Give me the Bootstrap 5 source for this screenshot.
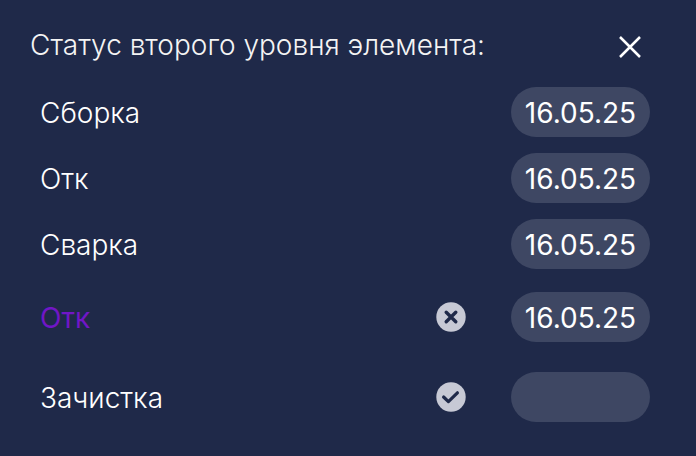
<!DOCTYPE html>
<html lang="ru">
<head>
<meta charset="utf-8">
<meta name="viewport" content="width=device-width, initial-scale=1">
<title>Статус второго уровня элемента</title>
<link href="https://cdn.jsdelivr.net/npm/bootstrap@5.3.0/dist/css/bootstrap.min.css" rel="stylesheet">
<style>
  body {
    background: #1f2949;
    color: #fff;
    font-family: Inter, "Liberation Sans", sans-serif;
    font-size: 28px;
    font-weight: 300;
    line-height: 34px;
  }
  .status-panel { padding: 27px 46px 24px 30px; }
  .status-title { color: #f4f4f4; font-size: 28px; line-height: 36px; font-weight: 300; }
  .close-btn { padding: 9px; line-height: 0; }
  .status-list { padding-left: 10px; margin-top: 20px; gap: 16px; }
  .status-list label { padding-top: 2px; }
  .date-field {
    width: 139px;
    height: 50px;
    padding: 2px 8px 0;
    background: #3e4763;
    color: #fff;
    font-size: 28px;
    font-weight: 400;
  }
  .date-field:focus { background: #3e4763; color: #fff; }
  .action-btn { width: 64px; height: 64px; margin-right: 28px; line-height: 0; }
  .status-list .status-current { color: #7116c6; font-weight: 400; }
</style>
</head>
<body>
<main class="status-panel">
  <header class="d-flex justify-content-between align-items-start">
    <h1 class="status-title mb-0">Статус второго уровня элемента:</h1>
    <button type="button" class="btn close-btn border-0" aria-label="Закрыть">
      <svg width="22" height="22" viewBox="0 0 22 22" fill="none" stroke="#fff" stroke-width="2.5" aria-hidden="true"><path d="M1 1 21 21M21 1 1 21"/></svg>
    </button>
  </header>
  <ul class="status-list list-unstyled d-flex flex-column mb-0">
    <li class="d-flex align-items-center">
      <label class="me-auto" for="date-assembly">Сборка</label>
      <input class="date-field form-control rounded-pill border-0 text-center" id="date-assembly" type="text" value="16.05.25">
    </li>
    <li class="d-flex align-items-center">
      <label class="me-auto" for="date-check-1">Отк</label>
      <input class="date-field form-control rounded-pill border-0 text-center" id="date-check-1" type="text" value="16.05.25">
    </li>
    <li class="d-flex align-items-center">
      <label class="me-auto" for="date-welding">Сварка</label>
      <input class="date-field form-control rounded-pill border-0 text-center" id="date-welding" type="text" value="16.05.25">
    </li>
    <li class="d-flex align-items-center">
      <label class="status-current me-auto" for="date-check-2">Отк</label>
      <button type="button" class="btn action-btn border-0 p-0" aria-label="Отменить">
        <svg width="30" height="30" viewBox="0 0 30 30" fill="none" aria-hidden="true"><circle cx="15" cy="15" r="14.7" fill="#c7c9d5"/><path d="M10.2 10.2 19.8 19.8M19.8 10.2 10.2 19.8" stroke="#1f2949" stroke-width="3.4" stroke-linecap="round"/></svg>
      </button>
      <input class="date-field form-control rounded-pill border-0 text-center" id="date-check-2" type="text" value="16.05.25">
    </li>
    <li class="d-flex align-items-center">
      <label class="me-auto" for="date-cleaning">Зачистка</label>
      <button type="button" class="btn action-btn border-0 p-0" aria-label="Подтвердить">
        <svg width="30" height="30" viewBox="0 0 30 30" fill="none" aria-hidden="true"><circle cx="15" cy="15" r="14.7" fill="#c7c9d5"/><path d="M7.6 15 12.4 19.6 21.4 10.8" stroke="#1f2949" stroke-width="3.2" stroke-linecap="round" stroke-linejoin="round"/></svg>
      </button>
      <input class="date-field form-control rounded-pill border-0 text-center" id="date-cleaning" type="text" value="">
    </li>
  </ul>
</main>
<script src="https://cdn.jsdelivr.net/npm/bootstrap@5.3.0/dist/js/bootstrap.bundle.min.js"></script>
</body>
</html>
